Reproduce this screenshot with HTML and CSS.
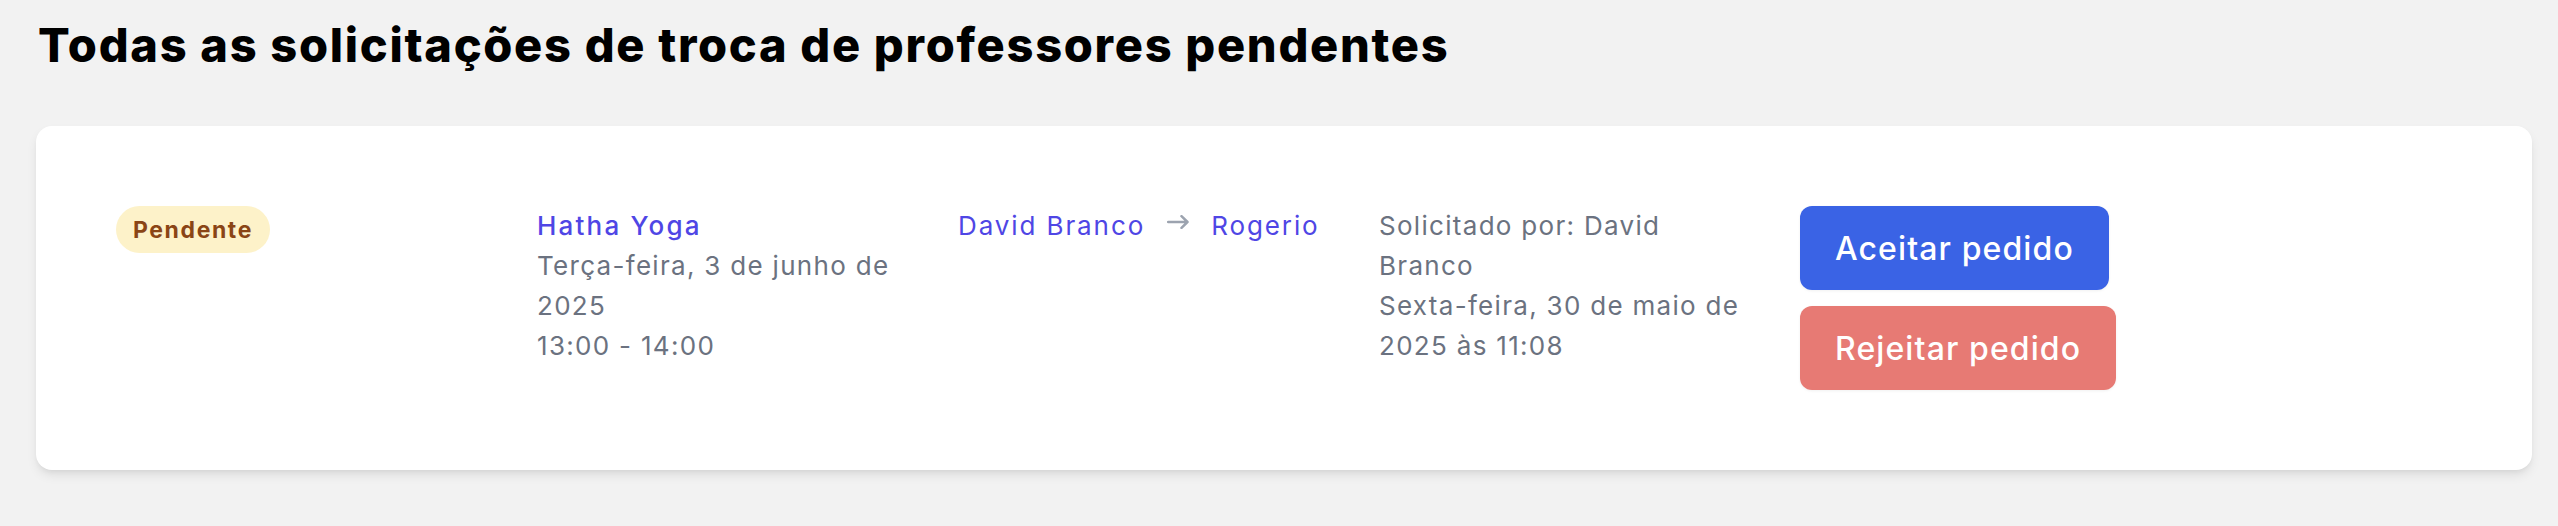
FILE: index.html
```html
<!DOCTYPE html>
<html lang="pt-BR">
<head>
<meta charset="utf-8">
<title>Solicitações de troca</title>
<link rel="stylesheet" href="styles.css">
</head>
<body>
<main class="page">
  <h1 class="title">Todas as solicitações de troca de professores pendentes</h1>
  <section class="card">
    <div class="row">
      <div class="col">
        <span class="badge">Pendente</span>
      </div>
      <div class="col">
        <div class="class-name">Hatha Yoga</div>
        <div class="muted">Terça-feira, 3 de junho de 2025</div>
        <div class="muted">13:00 - 14:00</div>
      </div>
      <div class="col">
        <div class="swap">
          <span class="person">David Branco</span>
          <svg class="arrow" viewBox="0 0 22 14" width="22" height="14" aria-hidden="true">
            <path d="M1.2 7H20.5M14.5 1.2L20.5 7L14.5 12.8" fill="none" stroke="#9ca3af" stroke-width="2.5" stroke-linecap="round" stroke-linejoin="round"/>
          </svg>
          <span class="person">Rogerio</span>
        </div>
      </div>
      <div class="col">
        <div class="muted">Solicitado por: David Branco</div>
        <div class="muted">Sexta-feira, 30 de maio de 2025 às 11:08</div>
      </div>
      <div class="col actions">
        <button class="btn btn-accept" type="button">Aceitar pedido</button>
        <button class="btn btn-reject" type="button">Rejeitar pedido</button>
      </div>
    </div>
  </section>
</main>
</body>
</html>
```

FILE: styles.css
```css
html, body {
  margin: 0;
  padding: 0;
  background: #f2f2f2;
}

body {
  font-family: Inter, "Noto Sans", "DejaVu Sans", sans-serif;
  color: #111;
}

.page {
  padding: 16px 26px 40px 36px;
}

.title {
  margin: 0 0 52px 2px;
  font-size: 47px;
  line-height: 58px;
  font-weight: 800;
  color: #000;
  letter-spacing: 1.7px;
}

.card {
  background: #fff;
  border-radius: 16px;
  padding: 80px;
  box-shadow: 0 6px 12px -2px rgba(0, 0, 0, 0.10), 0 3px 6px -3px rgba(0, 0, 0, 0.08);
}

.row {
  display: grid;
  grid-template-columns: repeat(5, 373px);
  column-gap: 48px;
  align-items: start;
}

.col {
  font-size: 26px;
  line-height: 40px;
  letter-spacing: 1.3px;
}

.badge {
  display: inline-flex;
  align-items: center;
  height: 47px;
  padding: 0 17px;
  border-radius: 999px;
  background: #fdf2c9;
  color: #8a4515;
  font-size: 23px;
  font-weight: 700;
  letter-spacing: 1.6px;
}

.class-name {
  color: #4f46e5;
  font-weight: 500;
  letter-spacing: 2.2px;
}

.muted {
  color: #6b7280;
}

.swap {
  display: flex;
  align-items: flex-start;
  gap: 22px;
}

.person {
  color: #4f46e5;
  letter-spacing: 1.9px;
}

.arrow {
  margin-top: 9px;
  flex: none;
}

.actions {
  display: flex;
  flex-direction: column;
  align-items: flex-start;
  gap: 16px;
  letter-spacing: 0;
}

.btn {
  height: 84px;
  padding: 0 35px;
  border: 0;
  border-radius: 12px;
  color: #fff;
  font-family: inherit;
  font-size: 32px;
  font-weight: 500;
  letter-spacing: 1.1px;
  cursor: pointer;
  box-shadow: 0 1px 3px rgba(0, 0, 0, 0.06);
}

.btn-accept {
  background: #3a63e5;
}

.btn-reject {
  background: #e77a74;
}
```
